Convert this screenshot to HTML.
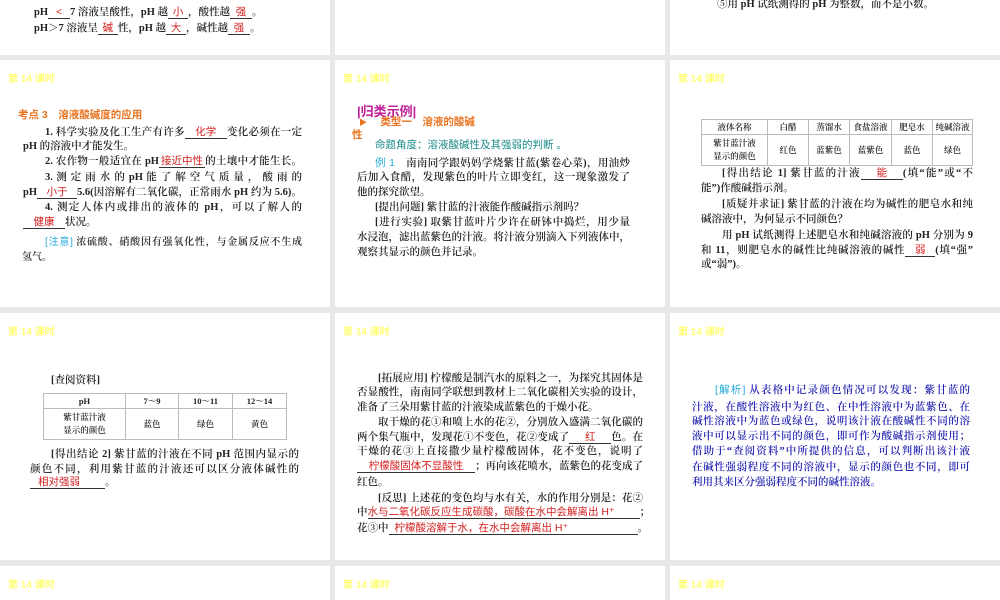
<!DOCTYPE html>
<html><head><meta charset="utf-8"><style>
*{margin:0;padding:0;box-sizing:border-box}
html,body{width:1000px;height:600px;overflow:hidden}
body{background:#e8e8e8;position:relative;font-family:"Liberation Serif","Noto Serif CJK SC",serif;color:#222}
.s{position:absolute;background:#fff;width:330px;height:247px;overflow:hidden}
.t{position:absolute;left:8px;font:bold 10px "Liberation Sans","Noto Sans CJK SC",sans-serif;color:#ffff70}
.l{position:absolute;white-space:nowrap;font-size:10.5px;line-height:14px;font-weight:600}
.j{text-align:justify;text-align-last:justify;white-space:normal;height:14px;overflow:hidden}
.r{color:#d42020;font-family:"Liberation Sans","Noto Sans CJK SC",sans-serif;font-weight:normal}
.u{display:inline-block;border-bottom:1px solid #333;text-align:center;text-align-last:center;line-height:12px;white-space:nowrap}
.ul{text-align:left;text-align-last:left}
.o{color:#e8731e;font-family:"Liberation Sans","Noto Sans CJK SC",sans-serif;font-weight:bold}
table{position:absolute;border-collapse:collapse;font-size:8.5px;font-weight:600;text-align:center}
td{border:1px solid #bbb;padding:0;line-height:13px}
.b{color:#2020b0}
.c{color:#22aadd;font-family:"Liberation Sans","Noto Sans CJK SC",sans-serif;font-weight:normal}
</style></head><body>

<!-- Row1 -->
<div class="s" style="left:0;top:-192px">
<div class="l" style="left:34px;top:198px">pH<span class="u r" style="width:22px">&lt;</span>7 溶液呈酸性，pH 越<span class="u r" style="width:20px">小</span>，酸性越<span class="u r" style="width:22px">强</span>。</div>
<div class="l" style="left:34px;top:214px">pH＞7 溶液呈<span class="u r" style="width:20px">碱</span>性，pH 越<span class="u r" style="width:20px">大</span>，碱性越<span class="u r" style="width:22px">强</span>。</div>
</div>
<div class="s" style="left:335px;top:-192px"></div>
<div class="s" style="left:670px;top:-192px">
<div class="l" style="left:47px;top:190px">⑤用 pH 试纸测得的 pH 为整数，而不是小数。</div>
</div>

<!-- Row2 col1 -->
<div class="s" style="left:0;top:60px">
<div class="t" style="top:10px">第 14 课时</div>
<div class="l o" style="left:18px;top:48px;font-size:10.5px">考点 3　溶液酸碱度的应用</div>
<div class="l j" style="left:45px;top:66px;width:257px">1. 科学实验及化工生产有许多<span class="u r" style="width:42px">化学</span>变化必须在一定</div>
<div class="l" style="left:23px;top:80px">pH 的溶液中才能发生。</div>
<div class="l j" style="left:45px;top:95px;width:257px">2. 农作物一般适宜在 pH<span class="u r" style="width:46px">接近中性</span>的土壤中才能生长。</div>
<div class="l j" style="left:45px;top:111px;width:257px">3. 测 定 雨 水 的 pH 能 了 解 空 气 质 量 ， 酸 雨 的</div>
<div class="l j" style="left:23px;top:126px;width:279px">pH<span class="u r" style="width:40px">小于</span>5.6(因溶解有二氧化碳，正常雨水 pH 约为 5.6)。</div>
<div class="l j" style="left:45px;top:141px;width:257px">4. 测定人体内或排出的液体的 pH，可以了解人的</div>
<div class="l" style="left:23px;top:156px"><span class="u r" style="width:42px">健康</span>状况。</div>
<div class="l j" style="left:45px;top:176px;width:257px;font-size:10px"><span class="c">[注意]</span> 浓硫酸、硝酸因有强氧化性，与金属反应不生成</div>
<div class="l" style="left:22px;top:191px;font-size:10px">氢气。</div>
</div>

<!-- Row2 col2 -->
<div class="s" style="left:335px;top:60px">
<div class="t" style="top:10px">第 14 课时</div>
<div class="l" style="left:22px;top:41px;font:bold 13px 'Liberation Sans','Noto Sans CJK SC',sans-serif;color:#c0209a">|归类示例|</div>
<div class="l o" style="left:24px;top:55px;font-size:10.5px"><span style="font-size:8px">▶</span>　 类型一　溶液的酸碱</div>
<div class="l o" style="left:17px;top:68px;font-size:10.5px">性</div>
<div class="l" style="left:40px;top:78px;color:#1c8a8a;font-family:'Liberation Sans','Noto Sans CJK SC',sans-serif;font-weight:normal">命题角度：溶液酸碱性及其强弱的判断 。</div>
<div class="l j" style="left:40px;top:96px;width:255px"><span class="c">例 1</span>　南南同学跟妈妈学烧紫甘蓝(紫卷心菜)，用油炒</div>
<div class="l j" style="left:22px;top:111px;width:273px">后加入食醋，发现紫色的叶片立即变红，这一现象激发了</div>
<div class="l" style="left:22px;top:126px">他的探究欲望。</div>
<div class="l" style="left:40px;top:141px">[提出问题] 紫甘蓝的汁液能作酸碱指示剂吗？</div>
<div class="l j" style="left:40px;top:156px;width:255px">[进行实验] 取紫甘蓝叶片少许在研钵中捣烂，用少量</div>
<div class="l j" style="left:22px;top:171px;width:273px">水浸泡，滤出蓝紫色的汁液。将汁液分别滴入下列液体中，</div>
<div class="l" style="left:22px;top:186px">观察其显示的颜色并记录。</div>
</div>

<!-- Row2 col3 -->
<div class="s" style="left:670px;top:60px">
<div class="t" style="top:10px">第 14 课时</div>
<table style="left:31px;top:59px;width:272px">
<tr style="height:15px"><td style="width:66px">液体名称</td><td style="width:41px">白醋</td><td style="width:41px">蒸馏水</td><td style="width:42px">食盐溶液</td><td style="width:41px">肥皂水</td><td>纯碱溶液</td></tr>
<tr style="height:31px"><td>紫甘蓝汁液<br>显示的颜色</td><td>红色</td><td>蓝紫色</td><td>蓝紫色</td><td>蓝色</td><td>绿色</td></tr>
</table>
<div class="l j" style="left:52px;top:107px;width:251px">[得出结论 1] 紫甘蓝的汁液<span class="u r" style="width:42px">能</span>(填“能”或“不</div>
<div class="l" style="left:31px;top:122px">能”)作酸碱指示剂。</div>
<div class="l j" style="left:52px;top:138px;width:251px">[质疑并求证] 紫甘蓝的汁液在均为碱性的肥皂水和纯</div>
<div class="l" style="left:31px;top:153px">碱溶液中，为何显示不同颜色？</div>
<div class="l j" style="left:52px;top:169px;width:251px">用 pH 试纸测得上述肥皂水和纯碱溶液的 pH 分别为 9</div>
<div class="l j" style="left:31px;top:184px;width:272px">和 11，则肥皂水的碱性比纯碱溶液的碱性<span class="u r" style="width:30px">弱</span>(填“强”</div>
<div class="l" style="left:31px;top:198px">或“弱”)。</div>
</div>

<!-- Row3 col1 -->
<div class="s" style="left:0;top:313px">
<div class="t" style="top:10px">第 14 课时</div>
<div class="l" style="left:51px;top:61px">[查阅资料]</div>
<table style="left:43px;top:80px;width:244px">
<tr style="height:15px"><td style="width:82px">pH</td><td style="width:53px">7～9</td><td style="width:54px">10～11</td><td>12～14</td></tr>
<tr style="height:31px"><td>紫甘蓝汁液<br>显示的颜色</td><td>蓝色</td><td>绿色</td><td>黄色</td></tr>
</table>
<div class="l j" style="left:51px;top:135px;width:248px">[得出结论 2] 紫甘蓝的汁液在不同 pH 范围内显示的</div>
<div class="l j" style="left:30px;top:150px;width:269px">颜色不同，利用紫甘蓝的汁液还可以区分液体碱性的</div>
<div class="l" style="left:30px;top:163px"><span class="u r ul" style="width:75px;padding-left:8px">相对强弱</span>。</div>
</div>

<!-- Row3 col2 -->
<div class="s" style="left:335px;top:313px">
<div class="t" style="top:10px">第 14 课时</div>
<div class="l j" style="left:43px;top:59px;width:265px">[拓展应用] 柠檬酸是制汽水的原料之一，为探究其固体是</div>
<div class="l j" style="left:22px;top:73px;width:286px">否显酸性，南南同学联想到教材上二氧化碳相关实验的设计，</div>
<div class="l" style="left:22px;top:88px">准备了三朵用紫甘蓝的汁液染成蓝紫色的干燥小花。</div>
<div class="l j" style="left:43px;top:103px;width:265px">取干燥的花①和喷上水的花②，分别放入盛满二氧化碳的</div>
<div class="l j" style="left:22px;top:118px;width:286px">两个集气瓶中，发现花①不变色，花②变成了<span class="u r" style="width:42px">红</span>色。在</div>
<div class="l j" style="left:22px;top:132px;width:286px">干燥的花③上直接撒少量柠檬酸固体，花不变色，说明了</div>
<div class="l j" style="left:22px;top:147px;width:286px"><span class="u r" style="width:118px">柠檬酸固体不显酸性</span>；再向该花喷水，蓝紫色的花变成了</div>
<div class="l" style="left:22px;top:163px">红色。</div>
<div class="l j" style="left:43px;top:179px;width:265px">[反思] 上述花的变色均与水有关，水的作用分别是：花②</div>
<div class="l" style="left:22px;top:193px">中<span class="u r ul" style="width:272px">水与二氧化碳反应生成碳酸，碳酸在水中会解离出 H⁺</span>；</div>
<div class="l" style="left:22px;top:209px">花③中<span class="u r ul" style="width:249px;padding-left:6px">柠檬酸溶解于水，在水中会解离出 H⁺</span>。</div>
</div>

<!-- Row3 col3 -->
<div class="s" style="left:670px;top:313px">
<div class="t" style="top:10px">第 14 课时</div>
<div class="l j b" style="left:45px;top:70px;width:255px"><span class="c">[解析]</span> 从表格中记录颜色情况可以发现：紫甘蓝的</div>
<div class="l j b" style="left:22px;top:88px;width:278px">汁液，在酸性溶液中为红色、在中性溶液中为蓝紫色、在</div>
<div class="l j b" style="left:22px;top:102px;width:278px">碱性溶液中为蓝色或绿色，说明该汁液在酸碱性不同的溶</div>
<div class="l j b" style="left:22px;top:117px;width:278px">液中可以显示出不同的颜色，即可作为酸碱指示剂使用；</div>
<div class="l j b" style="left:22px;top:132px;width:278px">借助于“查阅资料”中所提供的信息，可以判断出该汁液</div>
<div class="l j b" style="left:22px;top:148px;width:278px">在碱性强弱程度不同的溶液中，显示的颜色也不同，即可</div>
<div class="l b" style="left:22px;top:163px">利用其来区分强弱程度不同的碱性溶液。</div>
</div>

<!-- Row4 -->
<div class="s" style="left:0;top:566px;height:34px"><div class="t" style="top:10px">第 14 课时</div></div>
<div class="s" style="left:335px;top:566px;height:34px"><div class="t" style="top:10px">第 14 课时</div></div>
<div class="s" style="left:670px;top:566px;height:34px"><div class="t" style="top:10px">第 14 课时</div></div>
</body></html>
